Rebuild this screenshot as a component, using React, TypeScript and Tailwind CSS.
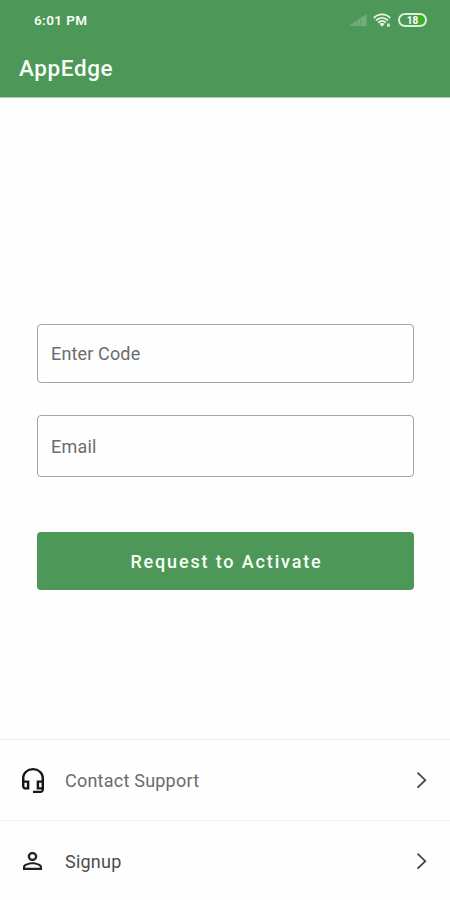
import React from "react";

function StatusIcons() {
  return (
    <div className="flex items-center">
      <svg className="h-[14px] w-[18px]" viewBox="0 0 18 14">
        <path d="M0 13 17.500 1v12z" fill="#fff" fillOpacity=".22" />
        <path d="M4 12.500v-2M8 12.500v-4.500M12 12.500V6" stroke="#4d9758" strokeOpacity=".7" />
      </svg>
      <svg className="ml-[6px] h-[15px] w-[19px]" viewBox="0 0 19 15" fill="none" stroke="#e8f6e6" strokeWidth="1.8">
        <path d="M.8 5C5.500.2 12.500.2 17.200 5M3 7.400C6.600 3.900 11.400 3.900 15 7.400M5.200 9.700C7.500 7.500 10.500 7.500 12.800 9.700" />
        <path d="M6.300 10.800Q9 9 11.700 10.800L9 13.800z" fill="#f0faef" stroke="none" />
        <path d="M14 10.500h3v3.300h-3z" fill="#c4e6c2" stroke="none" />
      </svg>
      <div className="ml-[6px] box-border flex h-[14px] w-[29px] items-center justify-center rounded-full border-2 border-[#d9efd6] p-px">
        <div className="flex h-full w-full items-center justify-center rounded-full bg-linear-to-r from-transparent from-72% to-[#35b41b] to-72% text-[10px] leading-none font-bold text-white">
          <span className="translate-y-[0.5px]">18</span>
        </div>
      </div>
    </div>
  );
}

function Chevron() {
  return (
    <svg className="h-[18px] w-[12px]" viewBox="0 0 12 18" fill="none" stroke="#444" strokeWidth="1.8">
      <path d="M1.500 1.700 9.300 9.200l-7.800 7.500" />
    </svg>
  );
}

function HeadsetIcon() {
  return (
    <svg className="h-[25px] w-[22px]" viewBox="3 1 18 22" preserveAspectRatio="none" fill="#161616">
      <path d="M12 1a9 9 0 0 0-9 9v7c0 1.660 1.340 3 3 3h3v-8H5v-2c0-3.870 3.130-7 7-7s7 3.130 7 7v2h-4v8h4v1h-7v2h6c1.660 0 3-1.340 3-3V10a9 9 0 0 0-9-9zM7 14v4H6c-.55 0-1-.45-1-1v-3h2zm12 4h-2v-4h2v4z" />
    </svg>
  );
}

function PersonIcon() {
  return (
    <svg className="h-[18px] w-[19px]" viewBox="4 4 16 16" preserveAspectRatio="none" fill="#222">
      <path d="M12 5.900a2.100 2.100 0 1 1 0 4.200 2.100 2.100 0 0 1 0-4.200m0 9c2.970 0 6.100 1.460 6.100 2.100v1.100H5.900V17c0-.64 3.130-2.100 6.100-2.100M12 4C9.790 4 8 5.790 8 8s1.790 4 4 4 4-1.790 4-4-1.790-4-4-4zm0 9c-2.670 0-8 1.340-8 4v3h16v-3c0-2.660-5.330-4-8-4z" />
    </svg>
  );
}

export default function App() {
  return (
    <div className="flex h-[900px] w-[450px] flex-col overflow-hidden bg-[#fefefe] font-['Roboto',sans-serif]">
      <header className="h-[98px] border-b border-[#a9cdae] bg-[#4d9758] text-[#f7fdf5]">
        <div className="flex h-[40px] items-center justify-between pr-[23px] pl-[34px]">
          <span className="text-[13.5px] font-semibold tracking-[0.4px]">6:01 PM</span>
          <StatusIcons />
        </div>
        <h1 className="pt-[12px] pl-[19px] text-[22.500px] leading-[33px] font-medium tracking-[0.6px]">AppEdge</h1>
      </header>

      <main className="flex flex-1 flex-col px-[37px] pt-[226px]">
        <input
          className="h-[59px] w-[377px] rounded-[4px] border-[1.5px] border-[#a5a5a5] bg-transparent px-[13px] text-[18px] tracking-[0.15px] outline-none placeholder:text-[#6c6c6c]"
          placeholder="Enter Code"
        />
        <input
          className="mt-[32px] h-[62px] w-[377px] rounded-[4px] border-[1.5px] border-[#a5a5a5] bg-transparent px-[13px] text-[18px] tracking-[0.2px] outline-none placeholder:text-[#6c6c6c]"
          placeholder="Email"
        />
        <button className="mt-[55px] h-[58px] w-[377px] rounded-[4px] bg-[#4d9758] pl-[2px] text-[18px] font-medium tracking-[1.85px] text-[#f8fff6]">
          Request to Activate
        </button>
      </main>

      <nav className="text-[18px] tracking-[0.23px]">
        <a className="flex h-[81px] items-center border-t border-[#ececec] pr-[22px] pl-[22px] text-[#6b6b6b]">
          <span className="flex w-[43px]"><HeadsetIcon /></span>
          <span className="flex-1">Contact Support</span>
          <Chevron />
        </a>
        <a className="flex h-[80px] items-center border-t border-[#f2f2f2] pr-[22px] pl-[23px] text-[#4c4c4c]">
          <span className="flex w-[42px]"><PersonIcon /></span>
          <span className="flex-1 pt-[2px]">Signup</span>
          <Chevron />
        </a>
      </nav>
    </div>
  );
}
